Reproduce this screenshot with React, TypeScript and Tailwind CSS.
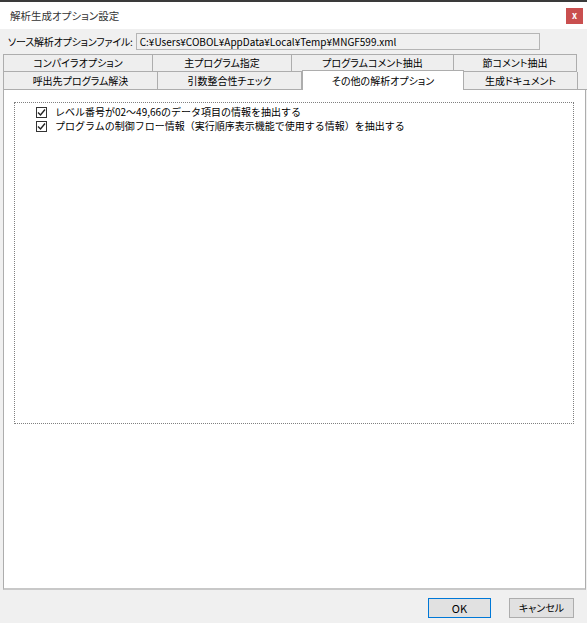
import React from 'react'

const topTabs = [
  { label: 'コンパイラオプション', w: 'w-[150px]' },
  { label: '主プログラム指定', w: 'w-[139px]' },
  { label: 'プログラムコメント抽出', w: 'w-[162px]' },
  { label: '節コメント抽出', w: 'w-[123px]' },
]

const Check = ({ label }: { label: string }) => (
  <div className="flex items-center h-[14px]">
    <div className="w-[11px] h-[11px] border border-[#333] bg-white flex items-center justify-center">
      <svg width="9" height="9" viewBox="0 0 9 9">
        <path d="M1 4.5 L3.5 7 L8 1.5" fill="none" stroke="#222" strokeWidth="1.4" />
      </svg>
    </div>
    <span className="ml-[8px] whitespace-nowrap">{label}</span>
  </div>
)

export default function App() {
  return (
    <div className="w-[587px] h-[623px] bg-[#f0f0f0] flex flex-col border-t-2 border-[#3a3a3a] text-[10px] leading-[14px] text-black font-['Noto_Sans_CJK_JP','Noto_Sans',sans-serif] overflow-hidden">
      {/* title bar */}
      <div className="h-[27px] bg-white flex items-center justify-between pl-[10px] pr-[4px]">
        <span className="text-[10.5px] text-[#333] [font-feature-settings:'palt']">解析生成オプション設定</span>
        <div className="w-[17px] h-[16px] bg-[#c94f4f] flex items-center justify-center text-white text-[9px] leading-none font-bold">x</div>
      </div>

      {/* source file */}
      <div className="mt-[4px] h-[17px] flex items-center pl-[8px] pr-[47px]">
        <span className="whitespace-nowrap tracking-[-0.2px] [font-feature-settings:'palt']">ソース解析オプションファイル:</span>
        <div className="flex-1 ml-[3px] h-[17px] border border-[#b5b5b5] bg-[#f0f0f0] flex items-center pl-[3px] whitespace-nowrap">
          C:¥Users¥COBOL¥AppData¥Local¥Temp¥MNGF599.xml
        </div>
      </div>

      {/* tabs */}
      <div className="mt-[4px] pl-[3px] [font-feature-settings:'palt']">
        <div className="flex h-[18px]">
          {topTabs.map((t, i) => (
            <div
              key={t.label}
              className={`${t.w} border border-[#adadad] ${i > 0 ? 'border-l-0' : ''} bg-[#eeeeee] flex items-center justify-center`}
            >
              {t.label}
            </div>
          ))}
        </div>
        <div className="flex h-[18px] border-b border-[#adadad]">
          <div className="w-[155px] border border-t-0 border-b-0 border-[#adadad] bg-[#eeeeee] flex items-center justify-center">呼出先プログラム解決</div>
          <div className="w-[144px] border-r border-[#adadad] bg-[#eeeeee] flex items-center justify-center">引数整合性チェック</div>
          <div className="w-[162px] -mt-[2px] -mb-px relative z-10 border border-b-0 border-[#adadad] bg-white flex items-center justify-center">その他の解析オプション</div>
          <div className="w-[114px] border-r border-[#adadad] bg-[#eeeeee] flex items-center justify-center">生成ドキュメント</div>
        </div>
      </div>

      {/* panel */}
      <div className="ml-[3px] mr-px h-[500px] bg-white border border-t-0 border-[#adadad] border-b-2 border-b-[#c8c8c8] pt-[12px] pl-[10px] pr-[11px]">
        <div className="h-[322px] border border-dotted border-[#808080] pt-[2px] pl-[21px]">
          <Check label="レベル番号が02～49,66のデータ項目の情報を抽出する" />
          <Check label="プログラムの制御フロー情報（実行順序表示機能で使用する情報）を抽出する" />
        </div>
      </div>

      {/* footer */}
      <div className="flex-1 flex justify-end items-start pt-[8px] pr-[13px] gap-[18px]">
        <button className="w-[63px] h-[20px] border border-[#0078d7] bg-[#e1e1e1] text-[11px] leading-none">OK</button>
        <button className="w-[65px] h-[20px] border border-[#adadad] bg-[#e1e1e1] text-[10px] leading-none [font-feature-settings:'palt']">キャンセル</button>
      </div>
    </div>
  )
}
